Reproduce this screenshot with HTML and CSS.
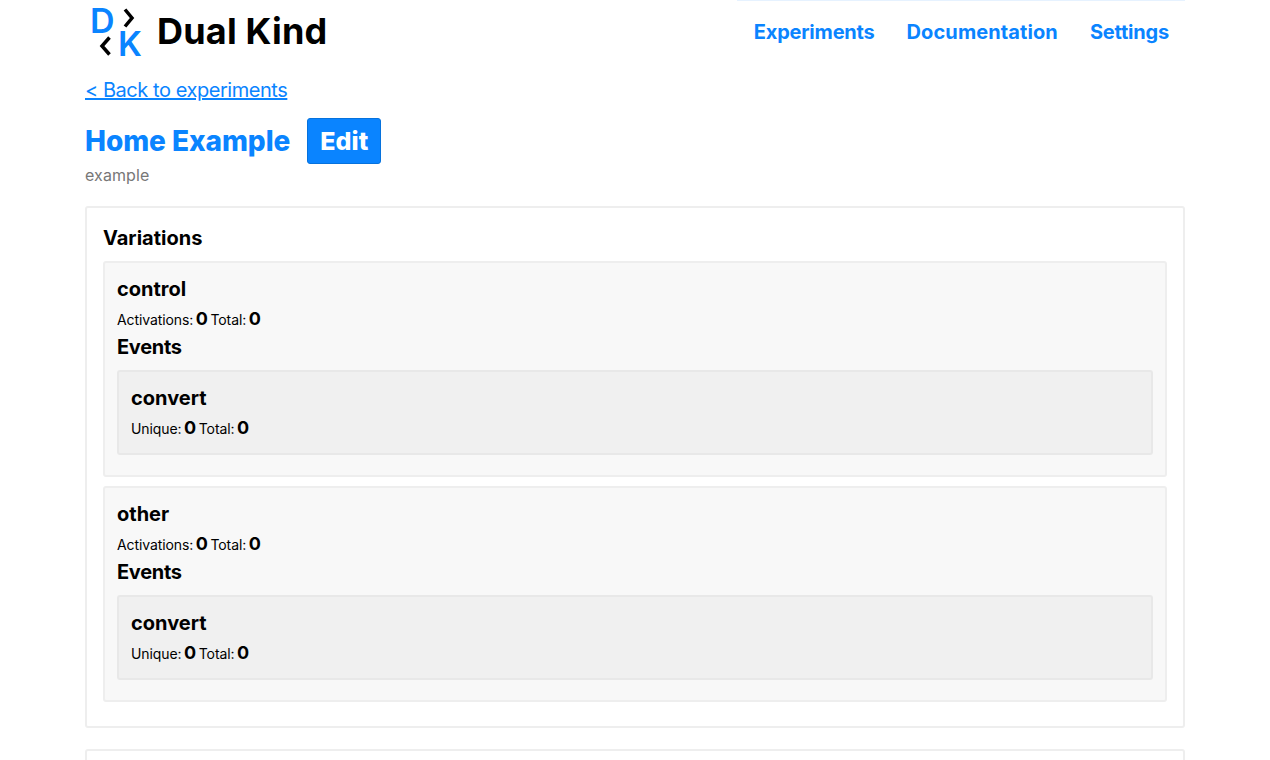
FILE: index.html
```html
<!DOCTYPE html>
<html lang="en">
<head>
<meta charset="utf-8">
<title>Dual Kind</title>
<link rel="stylesheet" href="styles.css">
</head>
<body>
<div class="container">
  <header class="header">
    <a class="brand" href="#">
      <svg class="logo" width="56" height="66" viewBox="0 0 56 66" aria-hidden="true">
        <text class="logo-letter" x="5" y="33">D</text>
        <text class="logo-letter" x="33" y="56">K</text>
        <path class="logo-chevron" d="M40 9.500L47 18l-7 8.500"/>
        <path class="logo-chevron" d="M24.500 37.500L17 46l7.500 8.500"/>
      </svg>
      <span class="brand-name">Dual Kind</span>
    </a>
    <nav class="nav">
      <a href="#">Experiments</a>
      <a class="nav-wide" href="#">Documentation</a>
      <a href="#">Settings</a>
    </nav>
  </header>
  <a class="back" href="#">&lt; Back to experiments</a>
  <div class="title-row">
    <h1>Home Example</h1>
    <button class="edit">Edit</button>
  </div>
  <p class="desc">example</p>
  <section class="card">
    <h3>Variations</h3>
    <div class="variation">
      <h4>control</h4>
      <div class="stats">Activations: <b>0</b> Total: <b>0</b></div>
      <h5>Events</h5>
      <div class="event">
        <h4>convert</h4>
        <div class="stats">Unique: <b>0</b> Total: <b>0</b></div>
      </div>
    </div>
    <div class="variation">
      <h4>other</h4>
      <div class="stats">Activations: <b>0</b> Total: <b>0</b></div>
      <h5>Events</h5>
      <div class="event">
        <h4>convert</h4>
        <div class="stats">Unique: <b>0</b> Total: <b>0</b></div>
      </div>
    </div>
  </section>
  <section class="card"></section>
</div>
</body>
</html>
```
FILE: styles.css
```css
* { box-sizing: border-box; }
html, body { margin: 0; padding: 0; height: 760px; overflow: hidden; background: #fff; }
body { font-family: Inter, "Liberation Sans", sans-serif; color: #000; }
a { color: #0a84ff; text-decoration: none; }
h1, h3, h4, h5, p { margin: 0; }
.container { width: 1100px; margin: 0 auto 0 85px; }
.header { display: flex; justify-content: space-between; height: 62px; }
.brand { display: flex; align-items: flex-start; color: #000; }
.logo { display: block; margin-right: 16px; margin-bottom: -4px; overflow: visible; }
.logo-letter { font: 600 34px Inter, sans-serif; fill: #0a84ff; }
.logo-chevron { fill: none; stroke: #000; stroke-width: 3.5; }
.brand-name { font-size: 36px; font-weight: 700; line-height: 62px; letter-spacing: 0.2px; }
.nav { display: flex; width: 448px; justify-content: flex-end; border-top: 1px solid #e6f2ff; padding: 0 16px 0 0; gap: 32px; align-items: center; font-size: 20px; font-weight: 700; letter-spacing: -0.2px; }
.nav-wide { letter-spacing: 0.1px; }
.back { display: inline-block; margin-top: 13px; font-size: 20px; line-height: 30px; text-decoration: underline; letter-spacing: -0.45px; }
.title-row { display: flex; align-items: center; gap: 17px; margin-top: 13px; height: 46px; }
h1 { color: #0a84ff; font-size: 28px; font-weight: 800; letter-spacing: -0.05px; }
.edit { width: 74px; height: 46px; background: #0a84ff; border: 1px solid #0672dd; border-radius: 3px; color: #fff; font: 800 25px Inter, sans-serif; padding: 0; }
.desc { color: #777; font-size: 16px; line-height: 22px; letter-spacing: 0.1px; }
.card { border: 2px solid #eee; border-radius: 3px; padding: 16px 16px 24px; margin-top: 21px; }
.desc + .card { margin-top: 20px; }
h3 { font-size: 20px; line-height: 29px; font-weight: 700; margin-bottom: 8px; }
h4 { font-size: 20px; line-height: 27px; font-weight: 700; }
h5 { font-size: 20px; line-height: 21px; font-weight: 700; letter-spacing: -0.3px; }
.stats { font-size: 14px; line-height: 34px; letter-spacing: -0.1px; word-spacing: -1.2px; }
.stats b { font-size: 18px; line-height: 20px; font-weight: 700; }
.variation { background: #f8f8f8; border: 2px solid #eee; border-radius: 3px; padding: 13px 12px 20px; }
.variation + .variation { margin-top: 9px; }
.event { background: #f0f0f0; border: 2px solid #e8e8e8; border-radius: 3px; padding: 13px 12px 7px; margin-top: 12px; }
```
